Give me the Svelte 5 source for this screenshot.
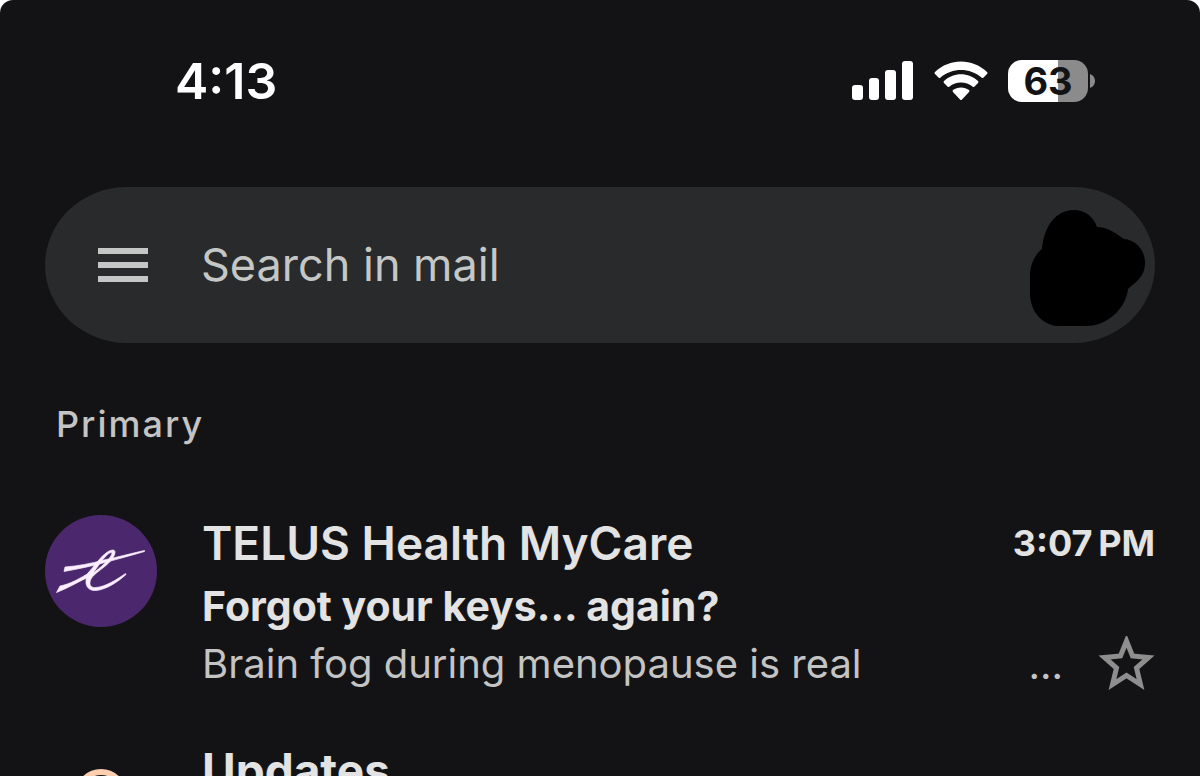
<script>
  const battery = 63;
  let starred = $state(false);
</script>

<div class="screen">
  <header class="status">
    <time class="clock">4:13</time>
    <div class="indicators">
      <svg width="62" height="40" viewBox="0 0 62 40" fill="#fff" role="img" aria-label="Signal">
        <rect x="0" y="24" width="11" height="15" rx="3" />
        <rect x="17" y="17" width="10" height="22" rx="3" />
        <rect x="33" y="9" width="11" height="30" rx="3" />
        <rect x="50" y="0" width="11" height="39" rx="3" />
      </svg>
      <svg width="54" height="40" viewBox="0 0 54 40" fill="#fff" role="img" aria-label="Wi-Fi">
        <path d="M1 11 C15.500-3 38.500-3 53 11 Q54 12 53 13 L49.500 16.500 Q48.500 17.500 47.500 16.500 C36 6.500 18 6.500 6.500 16.500 Q5.500 17.500 4.500 16.500 L1 13 Q0 12 1 11Z" />
        <path d="M10 20 C19.500 11 34.500 11 44 20 Q45 21 44 22 L40.500 25.500 Q39.500 26.500 38.500 25.500 C32 20 22 20 15.500 25.500 Q14.500 26.500 13.500 25.500 L10 22 Q9 21 10 20Z" />
        <path d="M19 29 C23.500 25.500 30.500 25.500 35 29 Q36 30 35 31 L28 38.500 Q27 39.500 26 38.500 L19 31 Q18 30 19 29Z" />
      </svg>
      <div class="battery">
        <span class="cell" style:--charge="{battery}%">{battery}</span>
        <svg width="5" height="14" viewBox="0 0 5 14" aria-hidden="true"><path d="M0 0 Q5 2 5 7 Q5 12 0 14Z" fill="#8b8b8c" /></svg>
      </div>
    </div>
  </header>

  <form class="search" role="search">
    <button class="plain" type="button" aria-label="Menu">
      <svg width="52" height="36" viewBox="0 0 52 36" fill="#c4c7c5">
        <path d="M1 1H51V7H1Z M1 15H51V21H1Z M1 29H51V35H1Z" />
      </svg>
    </button>
    <input type="search" placeholder="Search in mail" aria-label="Search in mail" />
    <button class="plain account" type="button" aria-label="Account">
      <svg width="116" height="118" viewBox="0 0 116 118">
        <path d="M13 40 C15 17 27 1 45 1 C56 1 65 8 68 18 C77 18 84 22 95 30 C107 31 116 41 116 54 C116 67 108 72 99 80 C97 99 79 117 57 117 L29 117 C12 116 1 101 1 84 L1 67 C1 57 5 46 13 40Z" />
      </svg>
    </button>
  </form>

  <main>
    <h1>Primary</h1>
    <article class="row">
      <svg class="avatar" width="112" height="112" viewBox="0 0 112 112" role="img" aria-label="TELUS">
        <circle cx="56" cy="56" r="56" fill="#4b286d" />
        <g fill="#fbeeff" stroke="#fbeeff" stroke-width="0.700">
          <path d="M20 52 C33 51 46 48.500 59 45 C73 42 86 38.500 99.500 35.500 L99.500 36.500 C86 40.500 73 44 60 47.500 C47 51 33 54 19 56.500Z" />
          <path d="M15 71 C26 69 35 63 45 57.500 L43.500 62 C33 67 23 73 11.500 77.500Z" />
          <path d="M43 58 C49 52 54 43 61 38 C65 35 69 34 70 36.500 C70.500 41 65 47.500 58.500 52.500 C52 57.500 45.500 62 45 67 C44.500 71 47 73 51 72.500 C61 71.500 71 65 80.500 58.500 L81 59.500 C72 67.500 62 74 51.500 75.500 C45 76 40.500 72.500 41 66 C41 63 42 60 43 58Z M48 58 C55 53 65 45 67 38.500 C67 36.500 64 38 61.500 40.500 C56 46 52 53 48 58Z" fill-rule="evenodd" />
        </g>
      </svg>
      <div class="content">
        <div class="line">
          <h2>TELUS Health MyCare</h2>
          <time class="sent">3:07&#8201;PM</time>
        </div>
        <p class="subject">Forgot your keys... again?</p>
        <div class="line preview">
          <p class="snippet">Brain fog during menopause is real</p>
          <span class="more">...</span>
          <button class="plain" type="button" aria-label="Star" aria-pressed={starred} onclick={() => (starred = !starred)}>
            <svg width="58" height="56" viewBox="0 0 58 56">
              <path d="M29.500 5 L35.500 20 L51.500 21.500 L39.500 32 L43.500 48.500 L29.500 39.500 L15.500 48.500 L19.500 32 L7.500 21.500 L23.500 20Z" fill={starred ? '#8e8e8f' : 'none'} stroke="#8e8e8f" stroke-width="5" />
            </svg>
          </button>
        </div>
      </div>
    </article>
    <article class="row">
      <svg class="avatar" width="112" height="112" viewBox="0 0 112 112" aria-hidden="true">
        <circle cx="56" cy="53" r="23" fill="none" stroke="#fdcfb0" stroke-width="6" />
      </svg>
      <div class="content"><h2 class="category">Updates</h2></div>
    </article>
  </main>
</div>

<style>
  :global(body) {
    background: #fff;
    overflow: hidden;
  }
  .screen {
    box-sizing: border-box;
    height: 100vh;
    overflow: hidden;
    padding: 51px 45px 0;
    border-radius: 13px 13px 0 0;
    background: #131315;
    color: #e3e3e3;
    font-family: Inter, "Liberation Sans", sans-serif;
  }
  h1, h2, p { margin: 0; white-space: nowrap; }
  .status {
    display: flex;
    align-items: center;
    justify-content: space-between;
    height: 60px;
    padding: 0 60px 0 130px;
    color: #fff;
  }
  .clock { font-size: 50px; font-weight: 600; }
  .indicators { display: flex; align-items: center; gap: 20px; }
  .battery { display: flex; align-items: center; gap: 2px; }
  .cell {
    width: 80px;
    border-radius: 14px;
    background: linear-gradient(90deg, #fff var(--charge), #8b8b8c var(--charge));
    color: #131315;
    font-size: 38px;
    line-height: 42px;
    font-weight: 700;
    text-align: center;
  }
  .search {
    display: flex;
    align-items: center;
    height: 156px;
    margin-top: 76px;
    padding: 0 10px 0 52px;
    box-sizing: border-box;
    border-radius: 82px / 78px;
    background: #292a2c;
  }
  .plain {
    display: block;
    flex: none;
    padding: 0;
    border: 0;
    background: none;
  }
  .plain svg { display: block; }
  .account { padding-top: 6px; }
  input {
    flex: 1;
    min-width: 0;
    margin-left: 52px;
    padding: 0;
    border: 0;
    outline: 0;
    background: none;
    color: #e3e3e3;
    font: 400 45px/60px Inter, "Liberation Sans", sans-serif;
  }
  input::placeholder { color: #c4c7c5; opacity: 1; }
  h1 {
    margin: 59px 0 0 11px;
    color: #c4c4c4;
    font-size: 36px;
    line-height: 44px;
    font-weight: 500;
    letter-spacing: 2px;
  }
  .row {
    display: flex;
    gap: 45px;
    padding-top: 69px;
  }
  .row + .row { padding-top: 49px; }
  .avatar { flex: none; }
  .content { flex: 1; min-width: 0; }
  .line { display: flex; align-items: center; }
  h2 {
    flex: 1;
    font-size: 46px;
    line-height: 56px;
    font-weight: 600;
  }
  .category { font-weight: 700; }
  .sent { font-size: 36px; font-weight: 700; }
  .subject {
    margin-top: 6px;
    font-size: 41px;
    line-height: 58px;
    font-weight: 700;
  }
  .snippet {
    flex: 1;
    font-size: 40px;
    line-height: 58px;
  }
  .preview { color: #c4c4c4; }
  .more {
    margin-right: 34px;
    font-size: 40px;
  }
</style>
